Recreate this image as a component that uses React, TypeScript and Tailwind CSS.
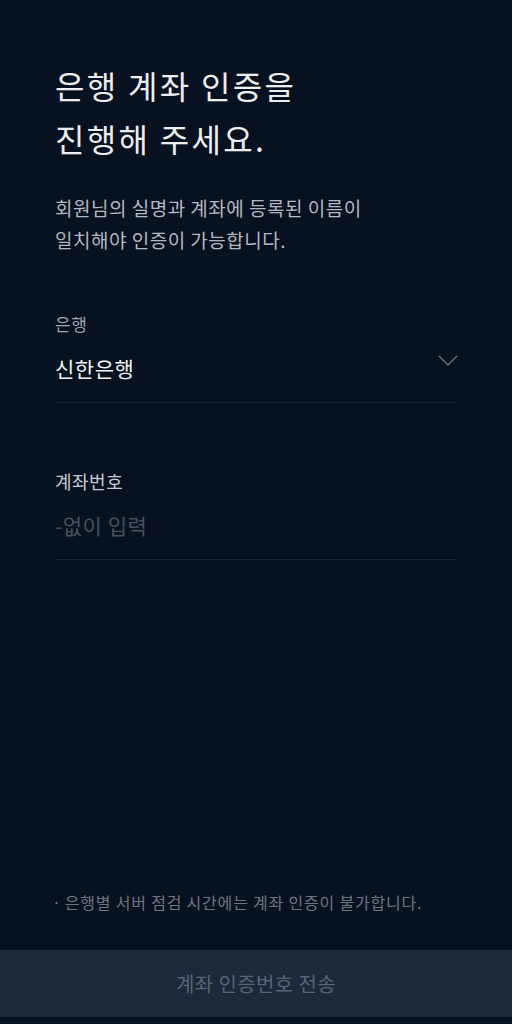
export default function App() {
  return (
    <div
      className="w-[512px] h-[1024px] bg-[#07111f] flex flex-col"
      style={{ fontFamily: '"Noto Sans CJK KR", "Noto Sans", sans-serif' }}
    >
      {/* Title */}
      <div className="px-[55px] pt-[59px]">
        <h1 className="text-[32px] leading-[53px] tracking-[2.3px] text-[#eceef1] font-normal">
          은행 계좌 인증을
          <br />
          진행해 주세요.
        </h1>
        <p className="mt-[27px] text-[19px] leading-[32px] tracking-[0.5px] text-[#b4b9c1]">
          회원님의 실명과 계좌에 등록된 이름이
          <br />
          일치해야 인증이 가능합니다.
        </p>
      </div>

      {/* Bank */}
      <div className="px-[55px] mt-[56px]">
        <div className="text-[17px] leading-[24px] tracking-[0.5px] text-[#a1a7b0]">은행</div>
        <div className="flex items-center justify-between h-[67px] border-b border-[#1b2535]">
          <span className="text-[21px] tracking-[0.5px] text-[#f1f2f4]">신한은행</span>
          <svg width="20" height="12" viewBox="0 0 20 12" className="mb-[16px] mr-[-1px]">
            <path d="M1 1l9 9 9-9" fill="none" stroke="#6b7380" strokeWidth="1.4" />
          </svg>
        </div>
      </div>

      {/* Account number */}
      <div className="px-[55px] mt-[66px]">
        <div className="text-[18px] leading-[24px] tracking-[0.5px] text-[#c9cdd3]">계좌번호</div>
        <div className="flex items-center h-[67px] border-b border-[#1b2535]">
          <span className="text-[21px] tracking-[0.5px] text-[#465062]">-없이 입력</span>
        </div>
      </div>

      <div className="flex-1" />

      {/* Notice */}
      <div className="px-[52px] pb-[36px] flex items-center gap-[3px] text-[16px] leading-[24px] tracking-[0.8px] text-[#6e7684]">
        <span>·</span>
        <span>은행별 서버 점검 시간에는 계좌 인증이 불가합니다.</span>
      </div>

      {/* Button */}
      <button className="h-[67px] w-full bg-[#1e2839] text-[20px] tracking-[0.4px] text-[#596373]">
        계좌 인증번호 전송
      </button>
      <div className="h-[7px]" />
    </div>
  );
}
